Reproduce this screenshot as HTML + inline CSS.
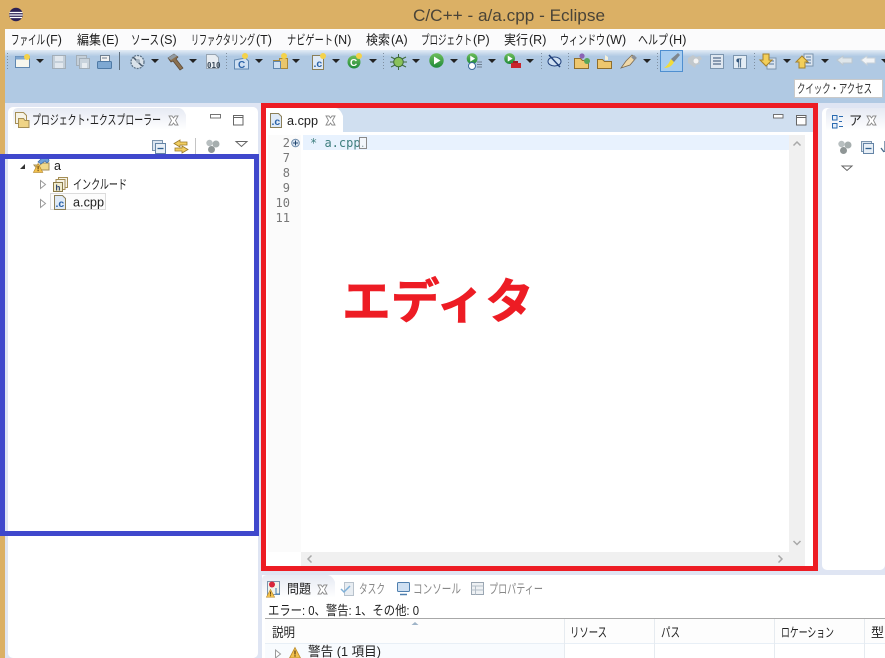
<!DOCTYPE html>
<html lang="ja"><head><meta charset="utf-8"><title>C/C++ - a/a.cpp - Eclipse</title>
<style>
html,body{margin:0;padding:0;width:885px;height:658px;overflow:hidden;background:#fff}
svg{display:block;position:absolute;left:0;top:0}
text{font-family:"Liberation Sans","Noto Sans CJK JP",sans-serif;font-size:13px;fill:#222}
.m{font-size:13px;fill:#1e1e1e}
.l{font-size:12.5px;fill:#1e1e1e}
.i{fill:#888}
.mono{font-family:"DejaVu Sans Mono","Liberation Mono",monospace;font-size:12px}
</style></head><body>
<svg width="885" height="658" viewBox="0 0 885 658" xmlns="http://www.w3.org/2000/svg">
<defs>
<linearGradient id="tb" x1="0" y1="0" x2="0" y2="1"><stop offset="0" stop-color="#e3ecf5"/><stop offset="1" stop-color="#b3cbe4"/></linearGradient>
<linearGradient id="tab" x1="0" y1="0" x2="0" y2="1"><stop offset="0" stop-color="#e6eaf3"/><stop offset="1" stop-color="#fff"/></linearGradient>
<linearGradient id="grn" x1="0" y1="0" x2="0" y2="1"><stop offset="0" stop-color="#6fbe5a"/><stop offset="1" stop-color="#1f8a3a"/></linearGradient>
<g id="dd"><path d="M0 0h8l-4 4z" fill="#222"/></g>
<g id="x"><path d="M0 0l3 0 1.500 2 1.500-2 3 0-2.500 4.500 2.500 4.500-3 0-1.500-2-1.500 2-3 0 2.500-4.500z" fill="#fff" stroke="#8a8a8a" stroke-width=".9"/></g>
<g id="cfile"><path d="M.5.5h8l3 3v11h-11z" fill="#dfeaf7" stroke="#8b7f58"/><text x="1.500" y="12" style="font-size:10.500px;font-weight:bold;fill:#2a62a8">.c</text></g>
<g id="gears"><circle cx="3.500" cy="4" r="3.200" fill="#b8bfc0"/><circle cx="10" cy="5" r="3.500" fill="#a6aeae"/><circle cx="5.500" cy="10.500" r="3.500" fill="#8f9696"/></g>
<g id="run"><circle cx="7.500" cy="7.500" r="7.200" fill="url(#grn)"/><path d="M5 3.500l6.500 4-6.500 4z" fill="#fff"/></g>
<g id="warn"><path d="M6 .5l5.500 10.500h-11z" fill="#f2c14e" stroke="#b98a2a" stroke-width=".8"/><path d="M5.400 3.500h1.200v4h-1.200zM5.400 8.300h1.200v1.300h-1.200z" fill="#5a3d10"/></g>
</defs>

<!-- window -->
<rect width="885" height="658" fill="#fff"/>
<rect width="885" height="29" fill="#dbb065"/>
<rect x="0" y="29" width="5" height="629" fill="#dbb065"/>
<rect x="5" y="29" width="880" height="21" fill="#fbfbfc"/>
<rect x="5" y="50" width="880" height="6" fill="url(#tb)"/>
<rect x="5" y="56" width="880" height="48" fill="#b0c9e3"/>
<rect x="5" y="103" width="880" height="555" fill="#dfe5f3"/>

<!-- title -->
<circle cx="16" cy="14.500" r="6.800" fill="#2c2255"/>
<path d="M9.500 12.500h13M9.300 15h13.400M10 17.500h12" stroke="#fff" stroke-width="1.200"/>
<text x="413" y="21" textLength="192" lengthAdjust="spacingAndGlyphs" style="font-size:16.500px;fill:#4a4438">C/C++ - a/a.cpp - Eclipse</text>

<!-- menu -->
<text class="m" x="11" y="44.500" textLength="34" lengthAdjust="spacingAndGlyphs">ファイル</text><text class="l" x="46" y="44">(F)</text>
<text class="m" x="77" y="44.500" textLength="24" lengthAdjust="spacingAndGlyphs">編集</text><text class="l" x="102" y="44">(E)</text>
<text class="m" x="131" y="44.500" textLength="28" lengthAdjust="spacingAndGlyphs">ソース</text><text class="l" x="160" y="44">(S)</text>
<text class="m" x="191" y="44.500" textLength="64" lengthAdjust="spacingAndGlyphs">リファクタリング</text><text class="l" x="256" y="44">(T)</text>
<text class="m" x="287" y="44.500" textLength="46" lengthAdjust="spacingAndGlyphs">ナビゲート</text><text class="l" x="334" y="44">(N)</text>
<text class="m" x="366" y="44.500" textLength="24" lengthAdjust="spacingAndGlyphs">検索</text><text class="l" x="391" y="44">(A)</text>
<text class="m" x="421" y="44.500" textLength="51" lengthAdjust="spacingAndGlyphs">プロジェクト</text><text class="l" x="473" y="44">(P)</text>
<text class="m" x="504" y="44.500" textLength="24" lengthAdjust="spacingAndGlyphs">実行</text><text class="l" x="529" y="44">(R)</text>
<text class="m" x="560" y="44.500" textLength="45" lengthAdjust="spacingAndGlyphs">ウィンドウ</text><text class="l" x="606" y="44">(W)</text>
<text class="m" x="638" y="44.500" textLength="30" lengthAdjust="spacingAndGlyphs">ヘルプ</text><text class="l" x="669" y="44">(H)</text>

<!-- toolbar separators -->
<g stroke="#7f8fa0" stroke-dasharray="1 2">
<path d="M7.500 53v16M226.500 53v16M383.500 53v16M541.500 53v16M568.500 53v16M657.500 53v16M754.500 53v16"/>
</g>
<path d="M119.500 52v18" stroke="#5f7080"/>

<!-- toolbar icons -->
<g id="t1">
<rect x="15.500" y="56.500" width="14" height="11" fill="#f6f6ee" stroke="#5f87b0"/><rect x="15.500" y="56.500" width="14" height="3" fill="#7fa6d0"/>
<circle cx="27" cy="57" r="3" fill="#f4d24a"/>
<use href="#dd" x="36" y="59"/>
<rect x="52.500" y="55.500" width="13" height="13" fill="#c4cfd9" stroke="#a3aeb8"/><rect x="55" y="56" width="8" height="5" fill="#e2e8ee"/><rect x="55" y="63" width="8" height="5" fill="#e2e8ee"/>
<rect x="76.500" y="55.500" width="10" height="10" fill="#c4cfd9" stroke="#a3aeb8"/><rect x="79.500" y="58.500" width="10" height="10" fill="#c9d3dc" stroke="#a3aeb8"/><rect x="82" y="63" width="5" height="5" fill="#e8ecf0"/>
<rect x="100.500" y="55.500" width="9" height="7" fill="#f2f2f2" stroke="#6e7f90"/><rect x="97.500" y="61.500" width="14" height="7" rx="1" fill="#7ea8d2" stroke="#4f7aa6"/><path d="M102 58h5" stroke="#6e7f90"/>
<circle cx="137.500" cy="62" r="6.500" fill="#d9e2ea" stroke="#5d7388" stroke-dasharray="2 1" stroke-width="1.300"/><path d="M133 57l9 9" stroke="#46586a" stroke-width="1.500"/><circle cx="138" cy="61" r="2" fill="#a4b2bf"/>
<use href="#dd" x="151" y="59"/>
<path d="M168 58l6-4 4 3-2 2 7 9-3 2-7-9-2 1z" fill="#8a7050" stroke="#5a4632" stroke-width=".7"/>
<path d="M168 58l6-4 3 2-6 4z" fill="#8f9aa3"/>
<use href="#dd" x="189" y="59"/>
<path d="M206.500 54.500h9l3 3v11h-12z" fill="#e8edf2" stroke="#98a5b2"/><text x="207" y="68" style="font-size:7.500px;font-family:'DejaVu Sans Mono',monospace;font-weight:bold;fill:#3a4a5a">010</text>
<path d="M234.500 60l11-2 3 3v8h-14z" fill="#cfe0f2" stroke="#5f87b0"/><text x="238" y="68" style="font-size:10px;font-weight:bold;fill:#2a62a8">C</text><circle cx="245" cy="56" r="3" fill="#f4d24a"/>
<use href="#dd" x="255" y="59"/>
<path d="M273.500 60.500h6v-2h8v10h-14z" fill="#e9c66c" stroke="#a98838"/><rect x="273.500" y="61.500" width="7" height="7" fill="#cfe0f2" stroke="#5f87b0"/><circle cx="284" cy="56" r="3" fill="#f4d24a"/>
<use href="#dd" x="292" y="59"/>
<use href="#cfile" x="312" y="55"/><circle cx="323" cy="56" r="3" fill="#f4d24a"/>
<use href="#dd" x="332" y="59"/>
<circle cx="354" cy="62" r="6.500" fill="url(#grn)"/><text x="350" y="66" style="font-size:10px;font-weight:bold;fill:#fff">C</text><circle cx="359" cy="56" r="3" fill="#f4d24a"/>
<use href="#dd" x="369" y="59"/>
<circle cx="398.500" cy="62" r="4.800" fill="#8ac25a" stroke="#3e6a3a"/><path d="M391 57l4 2M406 57l-4 2M390 62h4M403 62h4M391 67l4-2M406 67l-4-2M398.500 54v3M398.500 67v3" stroke="#3e6a3a"/>
<use href="#dd" x="412" y="59"/>
<use href="#run" x="429" y="53"/>
<use href="#dd" x="450" y="59"/>
<use href="#run" transform="translate(466.500 53) scale(.75)"/><circle cx="472" cy="66" r="3.500" fill="#fff" stroke="#3a6a9a"/><path d="M477 62h5M477 64.500h5M477 67h5" stroke="#6f7f90"/>
<use href="#dd" x="488" y="59"/>
<use href="#run" transform="translate(504 53) scale(.75)"/><rect x="511" y="63" width="10" height="5" fill="#c9242c"/><rect x="513" y="61" width="5" height="2" fill="#9c1c22"/>
<use href="#dd" x="526" y="59"/>
<ellipse cx="554.500" cy="61.500" rx="6.500" ry="4.500" fill="#cfe0f2" stroke="#1f3f7a"/><path d="M549 55l11 12" stroke="#1f3f7a" stroke-width="1.500"/>
<path d="M574.500 58.500h6l2 2h6v8h-14z" fill="#eec76e" stroke="#8e6e2e"/><circle cx="582" cy="56" r="2.600" fill="#8a63b5"/><circle cx="587" cy="61" r="3" fill="#58a55a"/>
<path d="M597.500 59.500h5l2 2h7v7h-14z" fill="#eec76e" stroke="#8e6e2e"/><path d="M605 55l3 2v3h-3z" fill="#f6f0d8"/>
<path d="M621 68l5-7 6-6 4 3-6 7z" fill="#f0d8a8" stroke="#7a6a50" stroke-width=".8"/><path d="M631 57l3-2 3 3-3 2z" fill="#8a8f96"/>
<use href="#dd" x="643" y="59"/>
<rect x="660.500" y="50.500" width="22" height="21" fill="#a8cdf0" stroke="#4f8fd0"/>
<path d="M664 68c5 0 8-2 10-6l-3-3c-2 4-3 6-7 9z" fill="#f2dc3a"/><path d="M671 59l7-6 2 2-6 7z" fill="#7d868e"/>
<path d="M688 58l5-3 3 2 4-1 2 3-3 2 1 3-4 1-1 3-4-3-3-2z" fill="#c2c8cc"/><circle cx="696" cy="61" r="2.500" fill="#f4f4f4"/>
<rect x="710.500" y="54.500" width="13" height="14" fill="#dfe7f0" stroke="#7c95ae"/><path d="M713 58h8M713 61h8M713 64h8" stroke="#324e72"/>
<rect x="733.500" y="55.500" width="13" height="13" fill="#e4edf5" stroke="#7c95ae"/><text x="736" y="66" style="font-size:11px;font-weight:bold;fill:#32567c">¶</text>
<rect x="767" y="58" width="9" height="11" fill="#dbe5f0" stroke="#7c95ae"/><path d="M769 61h5M769 64h5" stroke="#5a7aa0"/>
<path d="M763 54h6v6h3l-6 6-6-6h3z" fill="#f3cf5a" stroke="#a5822c"/>
<use href="#dd" x="783" y="59"/>
<rect x="804" y="54" width="9" height="12" fill="#dbe5f0" stroke="#7c95ae"/><path d="M806 57h5M806 60h5M806 63h5" stroke="#5a7aa0"/>
<path d="M802 56l6 6h-3v6h-6v-6h-3z" fill="#f3cf5a" stroke="#a5822c"/>
<use href="#dd" x="821" y="59"/>
<path d="M837 60l6-4v2h9v5h-9v2z" fill="#dfe6ea" stroke="#bcc7cf"/>
<path d="M861 60l6-4v2h8v5h-8v2z" fill="#f2f4f6" stroke="#c6d0d8"/>
<use href="#dd" x="881" y="59"/>
</g>

<!-- quick access -->
<rect x="794.500" y="79.500" width="88" height="18" fill="#fff" stroke="#c9c9c9"/>
<text x="797" y="93" textLength="75" lengthAdjust="spacingAndGlyphs" style="font-size:12.500px;fill:#333">クイック・アクセス</text>

<!-- left panel -->
<rect x="8" y="107" width="250" height="551" rx="5" fill="#fff"/>
<path d="M13 130v-17q0-5 5-5h161q4 0 7 7v15z" fill="url(#tab)"/>
<path d="M15.500 112.500h8l3 3v8h-11z" fill="#f6f3e6" stroke="#a58e55"/><path d="M18.500 118.500h5l1.500 2h4v7h-10.500z" fill="#efd486" stroke="#a58e55"/>
<text x="32" y="124.500" textLength="129" lengthAdjust="spacingAndGlyphs" style="fill:#222">プロジェクト･エクスプローラー</text>
<use href="#x" x="169" y="116"/>
<rect x="210.500" y="114.500" width="10" height="3.500" fill="#fff" stroke="#666" stroke-width=".9"/>
<rect x="233.500" y="115.500" width="9.500" height="9.500" fill="#fff" stroke="#666"/><path d="M233.500 117.500h9.500" stroke="#666"/>
<rect x="152.500" y="140.500" width="10" height="10" fill="#dbe5f0" stroke="#7c95ae"/><rect x="155.500" y="143.500" width="10" height="10" fill="#e8eff6" stroke="#6484a6"/><path d="M157.500 148.500h6" stroke="#2f5f90" stroke-width="1.300"/>
<path d="M180 140l-6 3.500 6 3.500v-2h7v-3h-7z" fill="#f2cf62" stroke="#9a7a28" stroke-width=".8"/><path d="M182 146l6 3.500-6 3.500v-2h-7v-3h7z" fill="#f2cf62" stroke="#9a7a28" stroke-width=".8"/>
<path d="M195.500 138v16" stroke="#c4c4c4"/>
<use href="#gears" x="206" y="139"/>
<path d="M236 141.500h11l-5.500 5z" fill="#fff" stroke="#666"/>

<!-- tree -->
<path d="M20 169l5-5v5z" fill="#333"/>
<path d="M34 165h6l2-2h7v7h-11z" fill="#f0d88a" stroke="#a58e55"/><path d="M42 158c3-2 7 0 7 3l-2 2-2-2-4 3-3-2z" fill="#6fa0d8" stroke="#3a6aa6" stroke-width=".7"/>
<use href="#warn" transform="translate(33 163) scale(.85)"/>
<text x="54" y="170" style="font-size:12.500px">a</text>
<path d="M40.500 180.500l5 4-5 4z" fill="#fff" stroke="#9a9a9a"/>
<rect x="58.500" y="177.500" width="9" height="10" fill="#f6f3e6" stroke="#a58e55"/><rect x="56" y="179.500" width="9" height="10" fill="#f6f3e6" stroke="#a58e55"/><rect x="53.500" y="182.500" width="9" height="9" fill="#f2eccc" stroke="#8a7a48"/>
<text x="55.500" y="190.500" style="font-size:8px;font-weight:bold;fill:#28406a">h</text>
<text x="73" y="189" textLength="54" lengthAdjust="spacingAndGlyphs">インクルード</text>
<path d="M40.500 199.500l5 4-5 4z" fill="#fff" stroke="#9a9a9a"/>
<rect x="50.500" y="193.500" width="55" height="16" fill="#fcfcfc" stroke="#dcdcdc"/>
<use href="#cfile" x="54" y="195"/>
<text x="73" y="206.500" textLength="31" lengthAdjust="spacingAndGlyphs" style="font-size:12.500px">a.cpp</text>

<!-- blue frame -->
<rect x="2.500" y="156.500" width="254" height="377" fill="none" stroke="#3f48cc" stroke-width="5"/>
<rect x="0" y="154" width="5" height="382" fill="#3f48cc"/>

<!-- editor -->
<rect x="266" y="108" width="547" height="458" fill="#fff"/>
<rect x="266" y="108" width="547" height="24" fill="#d0dff0"/>
<path d="M266 132v-24h69q5 0 8 8v16z" fill="#fff"/>
<use href="#cfile" x="270" y="113"/>
<text x="287" y="125" textLength="31" lengthAdjust="spacingAndGlyphs" style="font-size:13px">a.cpp</text>
<use href="#x" x="326" y="116"/>
<rect x="773.500" y="114.500" width="9.500" height="3.500" fill="#fff" stroke="#666" stroke-width=".9"/>
<rect x="796.500" y="115.500" width="9.500" height="9.500" fill="#fff" stroke="#666"/><path d="M796.500 117.500h9.500" stroke="#666"/>
<rect x="266" y="132" width="547" height="3" fill="#fff"/>
<rect x="268" y="135" width="33" height="417" fill="#fbfbfb"/>
<rect x="303" y="135" width="486" height="15" fill="#e8f2fe"/>
<text class="mono" x="290" y="147" text-anchor="end" style="fill:#787878">2</text>
<text class="mono" x="290" y="162" text-anchor="end" style="fill:#787878">7</text>
<text class="mono" x="290" y="177" text-anchor="end" style="fill:#787878">8</text>
<text class="mono" x="290" y="192" text-anchor="end" style="fill:#787878">9</text>
<text class="mono" x="290" y="207" text-anchor="end" style="fill:#787878">10</text>
<text class="mono" x="290" y="222" text-anchor="end" style="fill:#787878">11</text>
<circle cx="295.500" cy="143" r="3.800" fill="#dce6f2" stroke="#6f8caa"/><path d="M293 143h5M295.500 140.500v5" stroke="#20456e"/>
<text class="mono" x="310" y="147" style="fill:#3f7f7f">* a.cpp</text>
<rect x="359.500" y="137.500" width="7" height="11" fill="#f2f6fb" stroke="#8a8a8a"/>
<text class="mono" x="360" y="147" style="fill:#8aa0a0;font-size:9px">.</text>
<rect x="789" y="135" width="16" height="417" fill="#f0f0f0"/>
<rect x="301" y="552" width="504" height="14" fill="#f0f0f0"/>
<g fill="none" stroke="#a8a8a8" stroke-width="1.500">
<path d="M793.500 145.500l3.500-3.500 3.500 3.500"/>
<path d="M793.500 541l3.500 3.500 3.500-3.500"/>
<path d="M311.500 555.500l-3.500 3.500 3.500 3.500"/>
<path d="M778.500 555.500l3.500 3.500-3.500 3.500"/>
</g>
<text x="342" y="318" textLength="192" lengthAdjust="spacingAndGlyphs" stroke="#ed1c24" stroke-width=".6" style="font-size:48px;font-weight:bold;fill:#ed1c24">エディタ</text>

<!-- red frame -->
<rect x="263.500" y="105.500" width="552" height="463" fill="none" stroke="#ed1c24" stroke-width="5"/>

<!-- right panel -->
<rect x="822" y="108" width="63" height="462" rx="5" fill="#fff"/>
<path d="M826 131v-18q0-5 5-5h54v23z" fill="url(#tab)"/>
<rect x="832.500" y="115.500" width="4.500" height="4.500" fill="#e8f0fa" stroke="#2a6ab0"/><rect x="832.500" y="123.500" width="4.500" height="4.500" fill="#e8f0fa" stroke="#2a6ab0"/><path d="M839 116.500h4M839 121.500h3M839 126.500h4" stroke="#2a6ab0"/>
<text x="849" y="125" style="font-size:13px">ア</text>
<use href="#x" x="867" y="116"/>
<use href="#gears" x="838" y="140"/>
<rect x="861.500" y="141.500" width="10" height="10" fill="#dbe5f0" stroke="#7c95ae"/><rect x="863.500" y="143.500" width="10" height="10" fill="#e8eff6" stroke="#6484a6"/><path d="M865.500 148.500h6" stroke="#2f5f90" stroke-width="1.300"/>
<path d="M885 141v11M881 148l3 4" stroke="#4a6a8a" stroke-width="1.300"/>
<path d="M842 166h10l-5 4.500z" fill="#fff" stroke="#666"/>

<!-- bottom panel -->
<rect x="262" y="575" width="623" height="83" fill="#fff"/>
<path d="M262 598v-18q0-5 5-5h60q5 0 8 7v16z" fill="url(#tab)"/>
<rect x="267.500" y="581.500" width="12" height="13" fill="#f2f2ea" stroke="#7c95ae"/>
<circle cx="272" cy="584.500" r="3" fill="#d8253a"/><path d="M276 588v6h4" stroke="#3a7ab8" fill="none"/>
<use href="#warn" transform="translate(266 589) scale(.75)"/>
<text x="287" y="593.500" textLength="24" lengthAdjust="spacingAndGlyphs">問題</text>
<use href="#x" x="318" y="585"/>
<path d="M344.500 583.500h9v13h-9z" fill="#e8edf2" stroke="#b8c2cc" transform="translate(0 -1)"/><path d="M341 589l3 3 6-6" stroke="#7fb0d8" fill="none" stroke-width="1.500"/>
<text class="i" x="359" y="593.500" textLength="26" lengthAdjust="spacingAndGlyphs">タスク</text>
<rect x="397.500" y="582.500" width="12" height="9" rx="1" fill="#cfe0f2" stroke="#4f7fae"/><path d="M400 594.500h7" stroke="#4f7fae" stroke-width="1.500"/>
<text class="i" x="413" y="593.500" textLength="48" lengthAdjust="spacingAndGlyphs">コンソール</text>
<rect x="471.500" y="582.500" width="12" height="12" fill="#eef1f4" stroke="#9aa6b2"/><path d="M471.500 586h12M475.500 586v8.500M471.500 590h12" stroke="#b4bec8"/>
<text class="i" x="489" y="593.500" textLength="54" lengthAdjust="spacingAndGlyphs">プロパティー</text>

<text x="268" y="615" textLength="151" lengthAdjust="spacingAndGlyphs" style="fill:#1e1e1e">エラー: 0、警告: 1、その他: 0</text>
<path d="M265 618.500h620" stroke="#a8a8a8"/>
<rect x="265" y="619" width="620" height="24" fill="#fdfdfd"/>
<path d="M411.500 625l3.500-3 3.500 3z" fill="#9fb4c8"/>
<path d="M265 643.500h620" stroke="#e8eff6"/>
<path d="M564.500 619v39M654.500 619v39M774.500 619v39M864.500 619v39" stroke="#e6ebf0"/>
<rect x="265" y="644" width="299" height="14" fill="#f8fbfe"/>
<text x="272" y="637" textLength="23" lengthAdjust="spacingAndGlyphs">説明</text>
<text x="570" y="637" textLength="37" lengthAdjust="spacingAndGlyphs">リソース</text>
<text x="661" y="637" textLength="19" lengthAdjust="spacingAndGlyphs">パス</text>
<text x="781" y="637" textLength="53" lengthAdjust="spacingAndGlyphs">ロケーション</text>
<text x="871" y="637">型</text>
<path d="M275.500 650l5 4-5 4z" fill="#fff" stroke="#9a9a9a"/>
<use href="#warn" x="289" y="647"/>
<text x="308" y="656" textLength="73" lengthAdjust="spacingAndGlyphs">警告 (1 項目)</text>
</svg>
</body></html>
